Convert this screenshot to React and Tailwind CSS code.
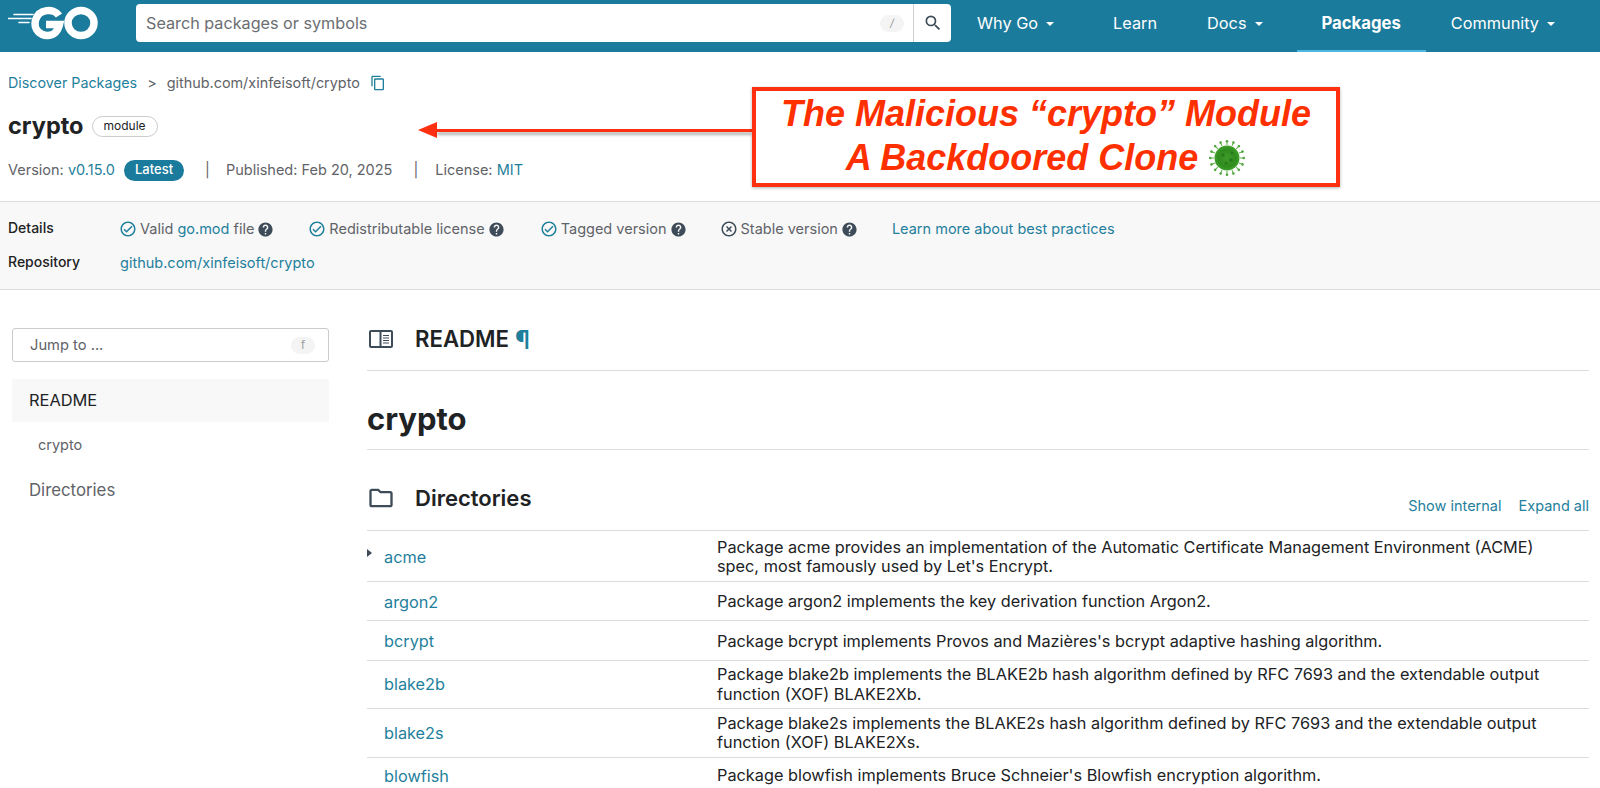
import React from "react";
import { MdHelp, MdOutlineCheckCircle, MdHighlightOff, MdContentCopy, MdSearch, MdOutlineFolder } from "react-icons/md";

function GoLogo() {
  return (
    <svg width="92" height="36" viewBox="0 0 92 36" className="block">
      <g fill="none" stroke="#fff" strokeLinecap="round">
        <path d="M6 9.5H25" strokeWidth="1.6" />
        <path d="M0 13.5H23" strokeWidth="1.6" />
        <path d="M11 17.5H21" strokeWidth="1.6" />
      </g>
      <g fill="none" stroke="#fff" strokeWidth="7.5">
        <path d="M51 10.5C46 3 31 3.5 27.5 15C25 25 33 31 40 30.5C46 30 50 26 51.5 19.5H38" />
        <ellipse cx="73" cy="18" rx="13" ry="12.5" />
      </g>
    </svg>
  );
}

function Caret() {
  return <span className="ml-2 mr-[9px] w-0 h-0 border-x-4 border-x-transparent border-t-[4px] border-t-white" />;
}

function NavItem({ label, caret, active }) {
  return (
    <div className={"flex items-center px-[25px] pb-[3px] text-white h-full border-b-[2px] " + (active ? "text-[16.7px] font-bold border-[#50b7e0]" : "text-[16.3px] border-transparent")}>
      <span>{label}</span>
      {caret && <Caret />}
    </div>
  );
}

function Help() {
  return <MdHelp className="text-[#3e4c59] ml-[3px]" size={17} />;
}

function Check({ children, className }) {
  return (
    <div className={"flex items-center " + (className || "")}>
      <MdOutlineCheckCircle className="text-[#1f7f9c] -ml-[1px] mr-[3px]" size={18} />
      <span>{children}</span>
      <Help />
    </div>
  );
}

function Virus() {
  const spikes = Array.from({ length: 16 }, (_, i) => (i * 360) / 16);
  return (
    <svg width="38" height="38" viewBox="0 0 38 38" className="ml-[10px]">
      <defs>
        <radialGradient id="v" cx="50%" cy="50%" r="50%">
          <stop offset="0%" stopColor="#3f9a28" />
          <stop offset="70%" stopColor="#2f8c1e" />
          <stop offset="100%" stopColor="#3fa02a" />
        </radialGradient>
      </defs>
      {spikes.map((a) => (
        <g key={a} transform={`rotate(${a} 19 19)`}>
          <line x1="19" y1="6" x2="19" y2="2.5" stroke="#5fb04c" strokeWidth="1" />
          <circle cx="19" cy="2.2" r="1.3" fill="#4fa53c" />
        </g>
      ))}
      <circle cx="19" cy="19" r="12.5" fill="url(#v)" />
      <circle cx="15" cy="16" r="1.5" fill="#25781a" />
      <circle cx="23" cy="21" r="1.8" fill="#25781a" />
      <circle cx="18" cy="24" r="1.3" fill="#25781a" />
      <circle cx="24" cy="14" r="1.2" fill="#25781a" />
    </svg>
  );
}

const rows = [
  { name: "acme", h: "h-[51px] pt-[2px]", caret: true, lines: ["Package acme provides an implementation of the Automatic Certificate Management Environment (ACME)", "spec, most famously used by Let's Encrypt."] },
  { name: "argon2", h: "h-[39px] pt-[2px]", lines: ["Package argon2 implements the key derivation function Argon2."] },
  { name: "bcrypt", h: "h-[40px] pt-[2px]", lines: ["Package bcrypt implements Provos and Mazières's bcrypt adaptive hashing algorithm."] },
  { name: "blake2b", h: "h-[48px]", lines: ["Package blake2b implements the BLAKE2b hash algorithm defined by RFC 7693 and the extendable output", "function (XOF) BLAKE2Xb."] },
  { name: "blake2s", h: "h-[49px]", lines: ["Package blake2s implements the BLAKE2s hash algorithm defined by RFC 7693 and the extendable output", "function (XOF) BLAKE2Xs."] },
  { name: "blowfish", h: "h-[37px]", lines: ["Package blowfish implements Bruce Schneier's Blowfish encryption algorithm."] },
];

export default function App() {
  return (
    <div className="relative h-[788px] overflow-hidden bg-white text-[#202224] font-['Inter',sans-serif]">
      <header className="flex h-[52px] bg-[#1b7b9c]">
        <div className="ml-2 mt-[5px] w-[128px] shrink-0"><GoLogo /></div>
        <div className="mt-1 flex h-[38px] w-[815px] shrink-0 items-center rounded-[4px] bg-white">
          <span className="flex-1 pl-[10px] text-[16.2px] text-[#6b6e72]">Search packages or symbols</span>
          <span className="mr-[9px] flex h-[17px] w-6 items-center justify-center rounded-full bg-[#f4f4f4] text-[11px] italic text-[#9a9a9a]">/</span>
          <span className="flex h-full w-[38px] items-center justify-center border-l border-[#cfcfcf]"><MdSearch size={20} className="text-[#3e4c59]" /></span>
        </div>
        <nav className="ml-[1px] flex">
          <NavItem label="Why Go" caret />
          <NavItem label="Learn" />
          <NavItem label="Docs" caret />
          <NavItem label="Packages" active />
          <NavItem label="Community" caret />
        </nav>
      </header>

      <section className="h-[149px] pl-2 pt-[22px]">
        <div className="flex items-center h-[18px] text-[14.4px] text-[#5f6368]">
          <span className="text-[14.3px] text-[#1f7f9c]">Discover Packages</span>
          <span className="mx-[10px]">&gt;</span>
          <span>github.com/xinfeisoft/crypto</span>
          <MdContentCopy size={16} className="ml-[10px] text-[#1f7f9c]" />
        </div>
        <div className="mt-[19px] flex items-center h-[30px]">
          <h1 className="text-[23.5px] font-bold">crypto</h1>
          <span className="ml-2 flex h-[21px] items-center rounded-full border border-[#c9cbcd] px-[11px] text-[12px]">module</span>
        </div>
        <div className="mt-[18px] flex items-center h-[22px] text-[14.5px] text-[#5f6368]">
          <span>Version:&nbsp;</span>
          <span className="text-[#1f7f9c]">v0.15.0</span>
          <span className="ml-[9px] flex h-[21px] items-center rounded-full bg-[#1b7b9c] px-[11px] text-[13px] font-medium text-white">Latest</span>
          <span className="ml-[21px] mr-4 text-[#5f6368]">|</span>
          <span>Published: Feb 20, 2025</span>
          <span className="ml-[21px] mr-[17px] text-[#5f6368]">|</span>
          <span>License:&nbsp;</span>
          <span className="text-[#1f7f9c]">MIT</span>
        </div>
      </section>

      <section className="h-[89px] border-y border-[#dadcde] bg-[#f8f8f8] pl-2 pt-[17px] text-[14.5px] text-[#5f6368]">
        <div className="flex items-center h-5">
          <span className="w-[112px] pb-[3px] text-[14px] font-medium text-[#202224]">Details</span>
          <Check>Valid <span className="text-[#1f7f9c]">go.mod</span> file</Check>
          <Check className="ml-[35px]">Redistributable license</Check>
          <Check className="ml-[36px]">Tagged version</Check>
          <div className="ml-[34px] flex items-center">
            <MdHighlightOff className="text-[#3e4c59] -ml-[1px] mr-[3px]" size={18} />
            <span>Stable version</span>
            <Help />
          </div>
          <span className="ml-[34px] text-[#1f7f9c]">Learn more about best practices</span>
        </div>
        <div className="mt-[14px] flex items-center h-5">
          <span className="w-[112px] pb-[3px] text-[14px] font-medium text-[#202224]">Repository</span>
          <span className="text-[#1f7f9c]">github.com/xinfeisoft/crypto</span>
        </div>
      </section>

      <div className="flex">
        <aside className="ml-3 mt-[38px] w-[317px] shrink-0">
          <div className="flex h-[34px] items-center justify-between rounded-[3px] border border-[#c9cbcd] pl-[17px] pr-[13px] pt-[1px] text-[14.7px] text-[#5f6368]">
            <span>Jump to ...</span>
            <span className="flex h-[17px] w-6 items-center justify-center rounded-full bg-[#f4f4f4] text-[11px] text-[#9a9a9a]">f</span>
          </div>
          <div className="mt-[17px] flex h-[43px] items-center bg-[#f8f8f8] pl-[17px] text-[16.4px] text-[#202224]">README</div>
          <div className="mt-[13px] pl-[26px] text-[14.5px] leading-[20px] text-[#5f6368]">crypto</div>
          <div className="mt-[25px] pl-[17px] text-[16.8px] leading-[20px] text-[#5f6368]">Directories</div>
        </aside>
        <main className="ml-[38px] mr-[11px] flex-1">
          <div className="flex h-[81px] items-center border-b border-[#dadcde] pt-[18px]">
            <svg width="24" height="18" viewBox="0 0 24 18" className="ml-[2px] text-[#3e4c59]" fill="none" stroke="currentColor">
              <rect x="1" y="1" width="22" height="16" rx="1" strokeWidth="2" />
              <path d="M11.5 1V17" strokeWidth="2" />
              <path d="M14 5.5H20M14 8H20M14 10.5H20M14 13H20" strokeWidth="1.2" />
            </svg>
            <h2 className="ml-[22px] flex items-center text-[22.2px] font-semibold">README<span className="ml-[6px] pt-[3px] text-[25px] leading-none text-[#1f7f9c]">¶</span></h2>
          </div>
          <div className="flex h-[79px] items-center border-b border-[#dadcde] pt-[18px]">
            <h1 className="text-[31px] font-bold">crypto</h1>
          </div>
          <div className="flex h-[81px] border-b border-[#dadcde]">
            <div className="flex h-full items-center pt-[16px]">
              <MdOutlineFolder size={28} className="text-[#3e4c59]" />
              <h2 className="ml-5 text-[22px] font-semibold">Directories</h2>
            </div>
            <div className="ml-auto flex items-end gap-[17px] pb-[13px] text-[14.5px] text-[#1f7f9c]">
              <span>Show internal</span>
              <span>Expand all</span>
            </div>
          </div>
          {rows.map((r) => (
            <div key={r.name} className={"relative flex items-center border-b border-[#dadcde] " + r.h}>
              {r.caret && <span className="absolute left-0 top-[18px] h-0 w-0 border-y-[4px] border-l-[5px] border-y-transparent border-l-[#3e4c59]" />}
              <span className="w-[350px] shrink-0 pl-[17px] text-[16.3px] text-[#1f7f9c]">{r.name}</span>
              <div className="text-[16.3px] leading-[19.5px]">
                {r.lines.map((l) => <div key={l} className="whitespace-nowrap">{l}</div>)}
              </div>
            </div>
          ))}
        </main>
      </div>

      <div className="absolute left-[418px] top-[122px] flex h-[16px] w-[334px] items-center">
        <span className="h-0 w-0 border-y-[8px] border-r-[19px] border-y-transparent border-r-[#ff3010]" />
        <span className="h-[3px] flex-1 bg-[#ff3010] shadow-[0_3px_3px_rgba(0,0,0,0.3)]" />
      </div>
      <div className="absolute left-[752px] top-[87px] flex h-[100px] w-[588px] flex-col items-center justify-center border-[4px] border-[#ff3010] bg-white pb-[3px] shadow-[0_1px_3px_rgba(0,0,0,0.3)] font-['Liberation_Sans',sans-serif] text-[36px] font-bold italic leading-[44px] text-[#ff3000]">
        <div>The Malicious “crypto” Module</div>
        <div className="flex items-center">A Backdoored Clone<Virus /></div>
      </div>
    </div>
  );
}
